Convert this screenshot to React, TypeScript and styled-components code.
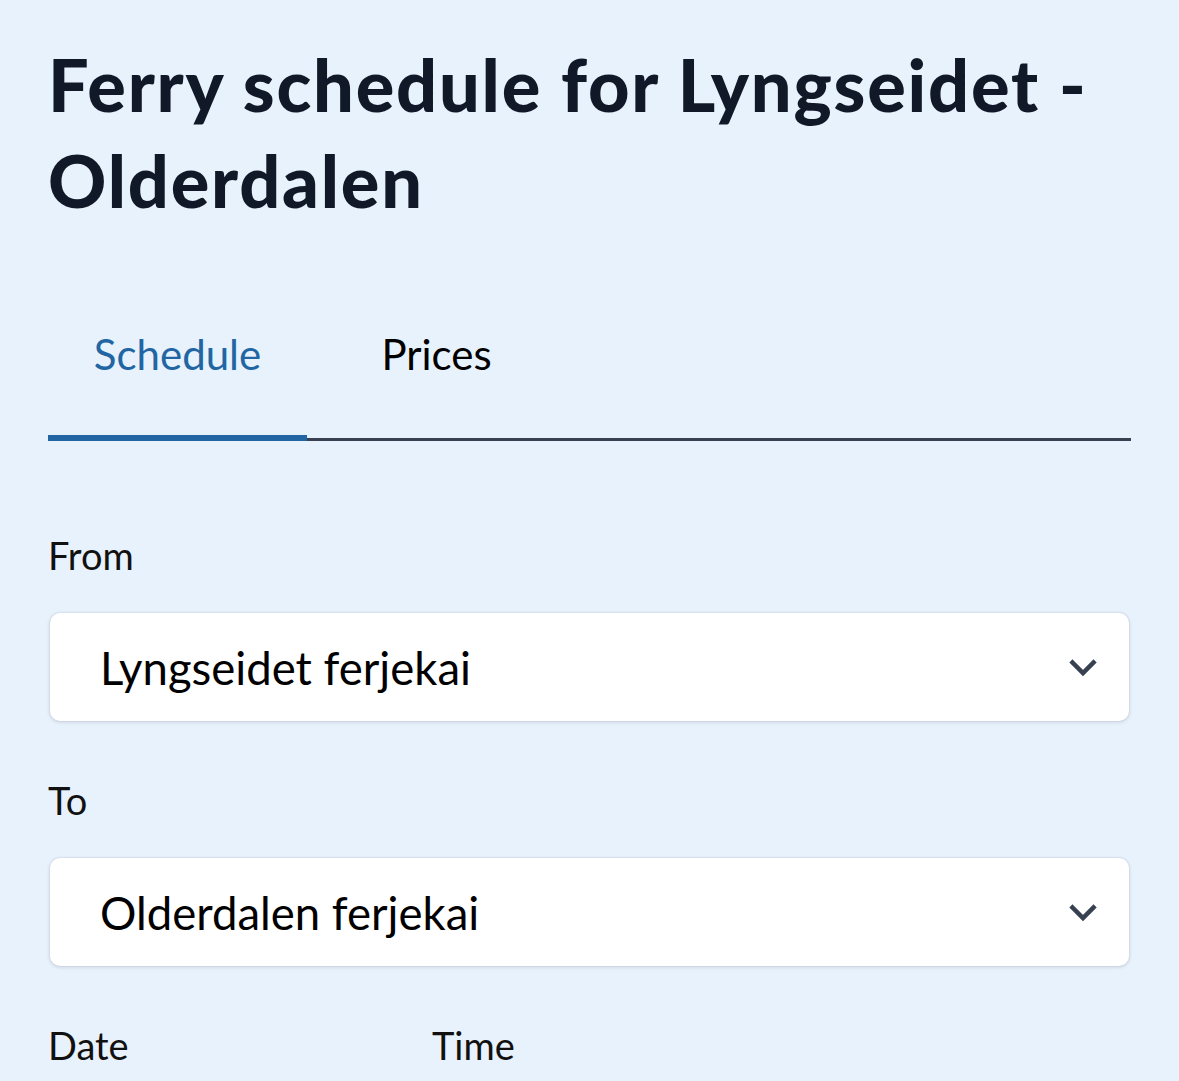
import React, { useState } from "react";
import styled, { createGlobalStyle } from "styled-components";

const GlobalStyle = createGlobalStyle`
  body {
    margin: 0;
    background: #e8f2fc;
    font-family: Lato, "Noto Sans", sans-serif;
    color: #111827;
  }
`;

const Page = styled.main`
  padding: 36px 48px 0 48px;
  min-height: 1081px;
  box-sizing: border-box;
`;

const Title = styled.h1`
  margin: 0 0 58px 0;
  font-size: 72px;
  line-height: 96px;
  font-weight: 900;
  letter-spacing: 1.8px;
  color: #111827;
`;

const TabBar = styled.div`
  display: flex;
  border-bottom: 3px solid #374151;
  margin-bottom: 84px;
`;

const Tab = styled.button<{ $active?: boolean }>`
  position: relative;
  width: 259px;
  padding: 40px 0 56px 0;
  border: none;
  background: none;
  font-family: inherit;
  font-size: 42px;
  line-height: 56px;
  color: ${(p) => (p.$active ? "#2166a3" : "#000")};
  cursor: pointer;

  &::after {
    content: "";
    display: ${(p) => (p.$active ? "block" : "none")};
    position: absolute;
    left: 0;
    right: 0;
    bottom: -3px;
    height: 6px;
    background: #2166a3;
  }
`;

const Label = styled.div`
  font-size: 38px;
  line-height: 60px;
  color: #111;
  margin-bottom: 28px;
`;

const Field = styled.div`
  margin-bottom: 49px;
`;

const SelectBox = styled.div`
  display: flex;
  align-items: center;
  justify-content: space-between;
  height: 108px;
  margin: 0 2px;
  padding: 0 28px 0 50px;
  background: #fff;
  border-radius: 10px;
  box-shadow: 0 1px 4px rgba(15, 23, 42, 0.14), 0 0 0 1px rgba(15, 23, 42, 0.04);
  font-size: 45.5px;
  color: #000;
`;

const DateTimeRow = styled.div`
  display: grid;
  grid-template-columns: 384px 1fr;
`;

const Chevron = () => (
  <svg width="36" height="36" viewBox="0 0 24 24" fill="none" stroke="#374151" strokeWidth="3" strokeLinecap="square">
    <path d="M5 9l7 7 7-7" />
  </svg>
);

export default function App() {
  const [tab, setTab] = useState("schedule");
  return (
    <>
      <GlobalStyle />
      <Page>
        <Title>Ferry schedule for Lyngseidet - Olderdalen</Title>
        <TabBar>
          <Tab $active={tab === "schedule"} onClick={() => setTab("schedule")}>Schedule</Tab>
          <Tab $active={tab === "prices"} onClick={() => setTab("prices")}>Prices</Tab>
        </TabBar>
        <Field>
          <Label>From</Label>
          <SelectBox>
            <span>Lyngseidet ferjekai</span>
            <Chevron />
          </SelectBox>
        </Field>
        <Field>
          <Label>To</Label>
          <SelectBox>
            <span>Olderdalen ferjekai</span>
            <Chevron />
          </SelectBox>
        </Field>
        <DateTimeRow>
          <Label>Date</Label>
          <Label>Time</Label>
        </DateTimeRow>
      </Page>
    </>
  );
}
